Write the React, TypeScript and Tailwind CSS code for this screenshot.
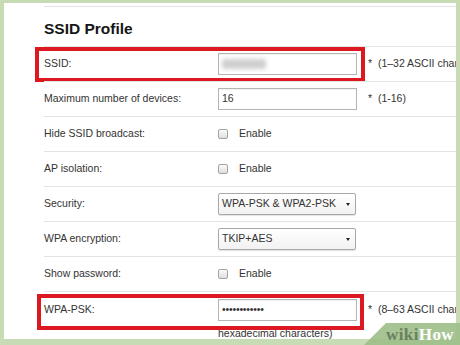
import type { ReactNode } from 'react';

// ─── Pieces ───────────────────────────────────────────────────────────────────

function TextBox({ children }: { children?: ReactNode }) {
  return (
    <div className="flex h-[22px] w-[139px] shrink-0 items-center border border-[#b4b4b4] bg-white pl-[3px] shadow-[inset_0_1px_1px_rgba(0,0,0,0.06)]">
      {children}
    </div>
  );
}

function SelectBox({ value }: { value: string }) {
  return (
    <div className="flex h-[22px] w-[138px] shrink-0 items-center justify-between rounded-[2px] border border-[#a8a8a8] bg-gradient-to-b from-white to-[#f2f2f2] pr-[5px] pl-[3px] shadow-[0_1px_1px_rgba(0,0,0,0.12)]">
      <span>{value}</span>
      <svg width="4" height="4" viewBox="0 0 4 4">
        <path d="M0 1h4L2 4z" fill="#222" />
      </svg>
    </div>
  );
}

function Checkbox() {
  return (
    <div className="flex items-center">
      <span className="h-[10px] w-[10px] rounded-[2px] border border-[#a3a3a3] bg-gradient-to-b from-[#fbfbfb] to-[#dedede]" />
      <span className="ml-[11px]">Enable</span>
    </div>
  );
}

function Note({ children }: { children: ReactNode }) {
  return <span className="ml-[11px] whitespace-nowrap">*&nbsp; {children}</span>;
}

function Row({ label, children, marked }: { label: string; children: ReactNode; marked?: boolean }) {
  return (
    <div className="relative flex h-[35px] items-center border-t border-[#e4e4e4]">
      <div className="w-[174px] shrink-0">{label}</div>
      <div className="flex items-center">{children}</div>
      {marked && (
        <div className="absolute top-0 left-[-9px] h-[35px] w-[330px] border-4 border-[#dc1820]" />
      )}
    </div>
  );
}

// ─── Page ─────────────────────────────────────────────────────────────────────

export default function App() {
  return (
    <div className="relative h-[345px] w-[460px] overflow-hidden bg-[#c7dbb5] pt-[3px] pr-[4px] pb-[6px] pl-[4px] font-['Liberation_Sans',Arial,sans-serif] text-[10.5px] text-[#333]">
      <div className="h-full w-full overflow-hidden bg-white pt-[3px] pl-[40px]">
        <div className="border-t border-[#e4e4e4]">
          <h1 className="mt-[12px] mb-[7px] h-[20px] text-[15.5px] leading-[20px] font-bold text-[#161616]">
            SSID Profile
          </h1>

          <Row label="SSID:" marked>
            <TextBox>
              <span className="h-[10px] w-[44px] rounded-[2px] bg-[#cfcfcf] blur-[2px]" />
            </TextBox>
            <Note>(1–32 ASCII characters)</Note>
          </Row>

          <Row label="Maximum number of devices:">
            <TextBox>16</TextBox>
            <Note>(1-16)</Note>
          </Row>

          <Row label="Hide SSID broadcast:">
            <Checkbox />
          </Row>

          <Row label="AP isolation:">
            <Checkbox />
          </Row>

          <Row label="Security:">
            <SelectBox value="WPA-PSK & WPA2-PSK" />
          </Row>

          <Row label="WPA encryption:">
            <SelectBox value="TKIP+AES" />
          </Row>

          <Row label="Show password:">
            <Checkbox />
          </Row>

          <div className="relative border-t border-[#e4e4e4]">
            <div className="flex h-[35px] items-center">
              <div className="w-[174px] shrink-0">WPA-PSK:</div>
              <TextBox>
                <span className="text-[10.5px] leading-none tracking-[-0.2px]">••••••••••••</span>
              </TextBox>
              <Note>(8–63 ASCII characters or 64</Note>
            </div>
            <div className="mt-[-1px] ml-[174px] leading-[14px]">hexadecimal characters)</div>
            <div className="absolute top-[2px] left-[-7px] h-[36px] w-[327px] border-4 border-[#dc1820]" />
          </div>
        </div>
      </div>

      {/* watermark */}
      <div className="absolute top-[323px] left-[364px] flex h-[22px] w-[96px] items-end bg-[#9dbf88]/90 pb-[2px] pl-[22px] [clip-path:polygon(22px_0,100%_0,100%_100%,0_100%)]">
        <span className="font-['Liberation_Serif',serif] text-[17px] leading-[17px] font-bold tracking-[0.4px]">
          <span className="text-[#6b8060]">wiki</span>
          <span className="text-white">How</span>
        </span>
      </div>
    </div>
  );
}
